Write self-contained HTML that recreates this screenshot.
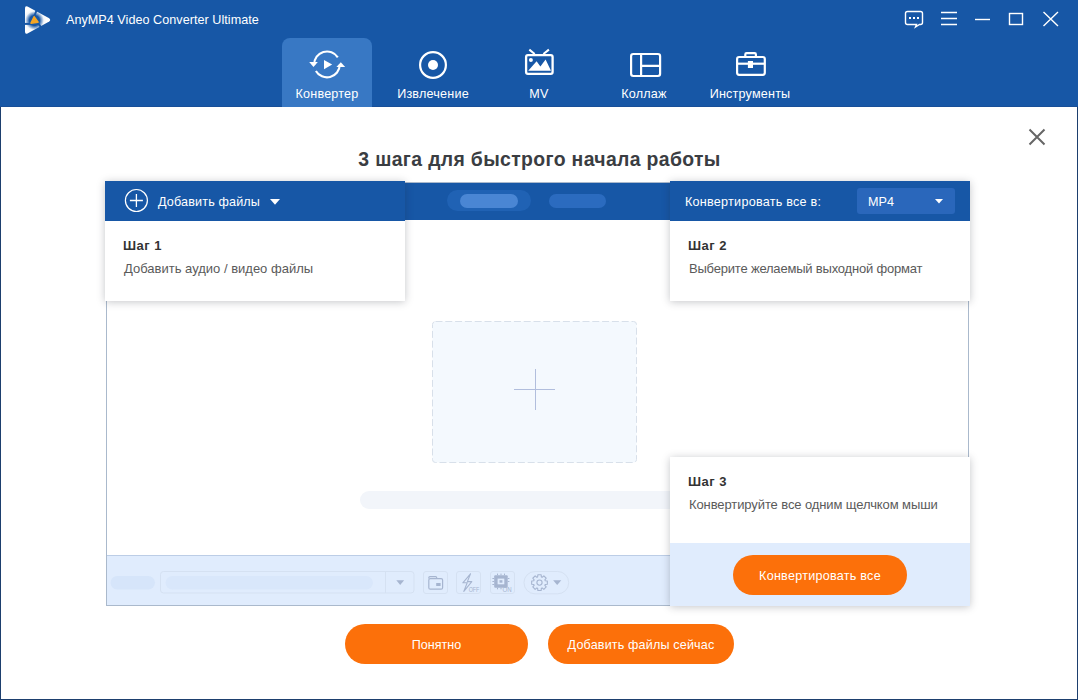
<!DOCTYPE html>
<html><head><meta charset="utf-8">
<style>
*{margin:0;padding:0;box-sizing:border-box}
html,body{width:1078px;height:700px;overflow:hidden;background:#fff;font-family:"Liberation Sans",sans-serif}
.abs{position:absolute}
#top{left:0;top:0;width:1078px;height:107px;background:#1757a6}
#win{left:0;top:107px;width:1078px;height:593px;background:#fff;border-left:1px solid #1d3f6e;border-right:1px solid #1d3f6e;border-bottom:1px solid #1d3f6e}
.apptitle{left:66px;top:13px;color:#fff;font-size:12.6px;letter-spacing:0.04px;white-space:nowrap}
.tab{top:38px;width:90px;height:69px;border-radius:8px 8px 0 0}
.tab.active{background:#3878c4}
.tablbl{top:87px;color:#fff;font-size:12.6px;white-space:nowrap;text-align:center;width:120px;letter-spacing:0.2px}
.title{left:0;width:1078px;top:148px;padding-left:1px;text-align:center;font-weight:bold;font-size:19.4px;letter-spacing:0.35px;color:#3a3d42}
/* underlying app */
#app{left:106px;top:182px;width:863px;height:424px;border:1px solid #aab9cc;background:#fff}
#apphdr{left:-1px;top:0;width:863px;height:37px;background:#1757a6}
#apptool{left:0;top:372px;width:861px;height:50px;background:#e0ecfd;border-top:1px solid #bccde6}
.card{background:#fff;box-shadow:0 1px 8px rgba(30,35,45,0.26)}
.cardhdr{left:0;top:0;width:100%;height:40px;background:#1757a6}
.stepT{font-weight:bold;font-size:13px;color:#333;white-space:nowrap;letter-spacing:0.5px}
.stepD{font-size:13px;color:#5a5a5a;white-space:nowrap}
.hdrtxt{color:#fff;font-size:12.6px;white-space:nowrap}
.btn{background:#fc700a;color:#fff;border-radius:20px;text-align:center;font-size:12.6px;white-space:nowrap}
</style></head><body>
<div id="top" class="abs"></div>
<div id="win" class="abs"></div>
<div class="abs" style="left:0;top:106px;width:1078px;height:1px;background:#184f98"></div>

<!-- logo -->
<svg class="abs" style="left:22px;top:4px" width="32" height="32" viewBox="0 0 32 32">
  <defs>
    <radialGradient id="lg" cx="12.5" cy="16.5" r="12" gradientUnits="userSpaceOnUse">
      <stop offset="0" stop-color="#1757a6"/>
      <stop offset="0.42" stop-color="#1757a6"/>
      <stop offset="0.78" stop-color="#fff" stop-opacity="0.95"/>
      <stop offset="1" stop-color="#fff"/>
    </radialGradient>
  </defs>
  <path d="M3 4.3 Q3 1.6 5.5 2.6 L27.2 14.2 Q29.2 16 27.2 17.6 L5.5 29.4 Q3 30.4 3 27.7 Z" fill="url(#lg)"/>
  <g stroke="#1757a6" stroke-width="2">
    <path d="M15.2 4.5 L12 13"/>
    <path d="M20.5 25.5 L16 19"/>
    <path d="M1.5 19.9 L9 19.9"/>
  </g>
  <path d="M11.4 12.4 Q12.2 11.3 12.9 12.5 L16.8 17.8 Q17.3 18.9 16 19 L9.2 19.9 Q7.9 20 8.3 18.8 Z" fill="#f5a524"/>
</svg>
<div class="abs apptitle">AnyMP4 Video Converter Ultimate</div>

<!-- window controls -->
<svg class="abs" style="left:900px;top:0px" width="178" height="40" viewBox="0 0 178 40">
  <g fill="none" stroke="#fff" stroke-width="1.4">
    <path d="M7.5 11.5 H20.5 Q22.5 11.5 22.5 13.5 V22.5 Q22.5 24.5 20.5 24.5 H19.5 L15.5 27 L16.5 24.5 H7.5 Q5.5 24.5 5.5 22.5 V13.5 Q5.5 11.5 7.5 11.5 Z"/>
    <path d="M41 12.5 H57 M41 18.5 H57 M41 24.5 H57"/>
    <path d="M75 19.5 H90"/>
    <rect x="109.5" y="13.5" width="13" height="11"/>
    <path d="M143.5 12 L158 26 M158 12 L143.5 26"/>
  </g>
  <g fill="#fff"><rect x="9" y="17" width="2" height="2"/><rect x="13" y="17" width="2" height="2"/><rect x="17" y="17" width="2" height="2"/></g>
</svg>

<!-- tabs -->
<div class="abs tab active" style="left:282px"></div>
<svg class="abs" style="left:307px;top:45px" width="40" height="38" viewBox="0 0 40 38">
  <g fill="none" stroke="#fff" stroke-width="2.1">
    <path d="M7.2 19.5 A12.8 12.8 0 0 1 30.8 12.4"/>
    <path d="M8.9 25.9 A12.8 12.8 0 0 0 32.8 19.8"/>
  </g>
  <g fill="#fff">
    <path d="M2.2 17 L10.8 17 L6.5 21.9 Z"/>
    <path d="M29.4 22 L38.2 22 L33.8 17.2 Z"/>
    <path d="M17 15 L17 24.2 L25.2 19.6 Z"/>
  </g>
</svg>
<svg class="abs" style="left:413px;top:45px" width="40" height="38" viewBox="0 0 40 38">
  <circle cx="20" cy="20" r="12.9" fill="none" stroke="#fff" stroke-width="2.2"/>
  <circle cx="20" cy="20" r="5" fill="#fff"/>
</svg>
<svg class="abs" style="left:519px;top:45px" width="40" height="38" viewBox="0 0 40 38">
  <rect x="7.1" y="10.1" width="26.5" height="18.8" rx="1.8" fill="none" stroke="#fff" stroke-width="2.3"/>
  <path d="M10.3 4.6 L15.7 9 M29.9 4.6 L24.4 9" stroke="#fff" stroke-width="2"/>
  <circle cx="11.9" cy="14.9" r="2" fill="#fff"/>
  <path d="M9.2 25.8 L17.6 16.3 L21.4 21.4 L26.6 14.4 L32 25.8 Z" fill="#fff"/>
</svg>
<svg class="abs" style="left:624px;top:45px" width="40" height="38" viewBox="0 0 40 38">
  <rect x="7.1" y="9" width="29" height="22" rx="2.2" fill="none" stroke="#fff" stroke-width="2.2"/>
  <path d="M17.1 9 V31 M17.1 20.9 H36" stroke="#fff" stroke-width="2.2"/>
</svg>
<svg class="abs" style="left:730px;top:45px" width="40" height="38" viewBox="0 0 40 38">
  <rect x="7.1" y="12" width="27.7" height="17.8" rx="2" fill="none" stroke="#fff" stroke-width="2.2"/>
  <path d="M15.3 12 V9.5 Q15.3 8.2 16.6 8.2 H24.6 Q25.9 8.2 25.9 9.5 V12" fill="none" stroke="#fff" stroke-width="2.2"/>
  <path d="M7 18.7 H35" stroke="#fff" stroke-width="2.2"/>
  <rect x="17.9" y="16" width="5.1" height="7" fill="#fff"/>
</svg>
<div class="abs tablbl" style="left:267px">Конвертер</div>
<div class="abs tablbl" style="left:373px">Извлечение</div>
<div class="abs tablbl" style="left:479px">MV</div>
<div class="abs tablbl" style="left:584px">Коллаж</div>
<div class="abs tablbl" style="left:690px">Инструменты</div>

<div class="abs title">3 шага для быстрого начала работы</div>
<svg class="abs" style="left:1027px;top:127px" width="20" height="20" viewBox="0 0 20 20"><path d="M2.5 2.5 L17.5 17.5 M17.5 2.5 L2.5 17.5" stroke="#666" stroke-width="2"/></svg>

<div id="app" class="abs">
  <div id="apphdr" class="abs">
    <div class="abs" style="left:341px;top:7px;width:84px;height:21px;border-radius:11px;background:#2062b4"></div>
    <div class="abs" style="left:354px;top:11px;width:58px;height:14px;border-radius:7px;background:#4a86d4"></div>
    <div class="abs" style="left:443px;top:11px;width:57px;height:14px;border-radius:7px;background:#2b6bbf"></div>
  </div>
  <!-- drop zone -->
  <svg class="abs" style="left:324px;top:137px" width="208" height="145" viewBox="0 0 208 145"><rect x="1.5" y="1.5" width="204" height="141" rx="3" fill="#f4f9fe" stroke="#d8e0ea" stroke-width="1" stroke-dasharray="7 2.8"/></svg>
  <div class="abs" style="left:406.5px;top:205.5px;width:41px;height:1.6px;background:#b1bedd"></div>
  <div class="abs" style="left:427.5px;top:186px;width:1.6px;height:41px;background:#b1bedd"></div>
  <!-- progress bar -->
  <div class="abs" style="left:253px;top:308px;width:400px;height:18px;border-radius:9px;background:#f2f5fa"></div>
  <div id="apptool" class="abs">
    <svg class="abs" style="left:0;top:0" width="861" height="49" viewBox="107 556 861 49">
      <rect x="110.5" y="576" width="44.5" height="13.5" rx="6.75" fill="#d6e5fa"/>
      <rect x="160.5" y="571.5" width="253.5" height="21.5" rx="3" fill="none" stroke="#d5e1f2"/>
      <rect x="165.5" y="576" width="207.5" height="13.5" rx="6.75" fill="#d9e7fb"/>
      <path d="M385.5 572 V593" stroke="#d5e1f2"/>
      <path d="M396.3 580.2 H404.1 L400.2 584.9 Z" fill="#a6b5d0"/>
      <g fill="none" stroke="#d5e1f2">
        <rect x="423.5" y="571.5" width="24" height="22" rx="2.5"/>
        <rect x="456.5" y="571.5" width="24" height="22" rx="2.5"/>
        <rect x="490.5" y="571.5" width="24" height="22" rx="2.5"/>
        <rect x="524" y="571.5" width="44.7" height="22.3" rx="11"/>
      </g>
      <g fill="none" stroke="#a6b5d0" stroke-width="1.2" stroke-linejoin="round">
        <path d="M428.8 578.6 V577.8 Q428.8 576.7 429.9 576.7 H435.6 Q436.7 576.7 436.7 577.8 V578.6"/>
        <rect x="428.8" y="578.6" width="13.8" height="10.6" rx="1.5"/>
        <path d="M470.5 573.8 L462.8 582.8 H467.2 L463.8 591.4 L471.8 581.6 H467.4 Z" stroke-width="1.1"/>
        <path d="M547.33 580.94 L547.33 584.26 L545.21 584.45 L544.85 585.32 L546.21 586.96 L543.86 589.31 L542.22 587.95 L541.35 588.31 L541.16 590.43 L537.84 590.43 L537.65 588.31 L536.78 587.95 L535.14 589.31 L532.79 586.96 L534.15 585.32 L533.79 584.45 L531.67 584.26 L531.67 580.94 L533.79 580.75 L534.15 579.88 L532.79 578.24 L535.14 575.89 L536.78 577.25 L537.65 576.89 L537.84 574.77 L541.16 574.77 L541.35 576.89 L542.22 577.25 L543.86 575.89 L546.21 578.24 L544.85 579.88 L545.21 580.75 Z" stroke-width="1.1"/>
        <circle cx="539.5" cy="582.6" r="2.6" stroke-width="1.1"/>
      </g>
      <rect x="436.2" y="583" width="4.4" height="3" fill="#a6b5d0"/>
      <text x="468.7" y="591.9" font-size="6.4" textLength="10.7" lengthAdjust="spacingAndGlyphs" fill="#a6b5d0" font-family="Liberation Sans">OFF</text>
      <rect x="494.2" y="575.2" width="13.5" height="12.5" rx="1" fill="#a6b5d0"/>
      <rect x="497.6" y="578.6" width="6.7" height="5.7" fill="#e0ecfd"/>
      <rect x="499.5" y="580.2" width="2.9" height="2.5" fill="#a6b5d0"/>
      <path d="M497.5 573.6 V575.2 M501 573.6 V575.2 M504.5 573.6 V575.2 M492.4 578.5 H494.2 M492.4 581.5 H494.2 M492.4 584.5 H494.2 M507.7 578.5 H509.4 M507.7 581.5 H509.4 M497.5 587.7 V589.3 M501 587.7 V589.3" stroke="#a6b5d0" stroke-width="1"/>
      <text x="502.6" y="591.9" font-size="6.4" textLength="9.2" lengthAdjust="spacingAndGlyphs" fill="#a6b5d0" font-family="Liberation Sans">ON</text>
      <path d="M553.1 580.2 H561.3 L557.2 584.9 Z" fill="#a6b5d0"/>
    </svg>
  </div>
</div>

<!-- card 1 -->
<div class="abs card" style="left:105px;top:181px;width:300px;height:120px">
  <div class="abs cardhdr">
    <svg class="abs" style="left:19px;top:7px" width="25" height="25" viewBox="0 0 25 25"><circle cx="12.4" cy="12.5" r="11" fill="none" stroke="#fff" stroke-width="1.2"/><path d="M5.9 12.5 H18.9 M12.4 6 V19" stroke="#fff" stroke-width="1.3"/></svg>
    <div class="abs hdrtxt" style="left:53px;top:14px;letter-spacing:0.15px">Добавить файлы</div>
    <svg class="abs" style="left:164px;top:17px" width="12" height="8" viewBox="0 0 12 8"><path d="M1 1 H11 L6 6.8 Z" fill="#fff"/></svg>
  </div>
  <div class="abs stepT" style="left:18px;top:57px">Шаг 1</div>
  <div class="abs stepD" style="left:19px;top:80px">Добавить аудио / видео файлы</div>
</div>
<!-- card 2 -->
<div class="abs card" style="left:670px;top:181px;width:300px;height:120px">
  <div class="abs cardhdr">
    <div class="abs hdrtxt" style="left:15px;top:14px;letter-spacing:0.25px">Конвертировать все в:</div>
    <div class="abs" style="left:187px;top:7px;width:98px;height:26px;border-radius:3px;background:#2a67bb"></div>
    <div class="abs hdrtxt" style="left:198px;top:14px">MP4</div>
    <svg class="abs" style="left:264px;top:17px" width="10" height="7" viewBox="0 0 10 7"><path d="M1 1 H9 L5 5.5 Z" fill="#fff"/></svg>
  </div>
  <div class="abs stepT" style="left:18px;top:57px">Шаг 2</div>
  <div class="abs stepD" style="left:19px;top:80px;letter-spacing:-0.2px">Выберите желаемый выходной формат</div>
</div>
<!-- card 3 -->
<div class="abs card" style="left:670px;top:457px;width:300px;height:149px">
  <div class="abs stepT" style="left:18px;top:17px">Шаг 3</div>
  <div class="abs stepD" style="left:19px;top:40px;letter-spacing:-0.1px">Конвертируйте все одним щелчком мыши</div>
  <div class="abs" style="left:0;top:86px;width:300px;height:63px;background:#e0ecfd"></div>
  <div class="abs btn" style="left:63px;top:98px;width:174px;height:40px;line-height:42px;letter-spacing:0.25px">Конвертировать все</div>
</div>

<div class="abs btn" style="left:345px;top:624px;width:183px;height:40px;line-height:42px">Понятно</div>
<div class="abs btn" style="left:548px;top:624px;width:186px;height:40px;line-height:42px;letter-spacing:0.15px">Добавить файлы сейчас</div>
</body></html>
